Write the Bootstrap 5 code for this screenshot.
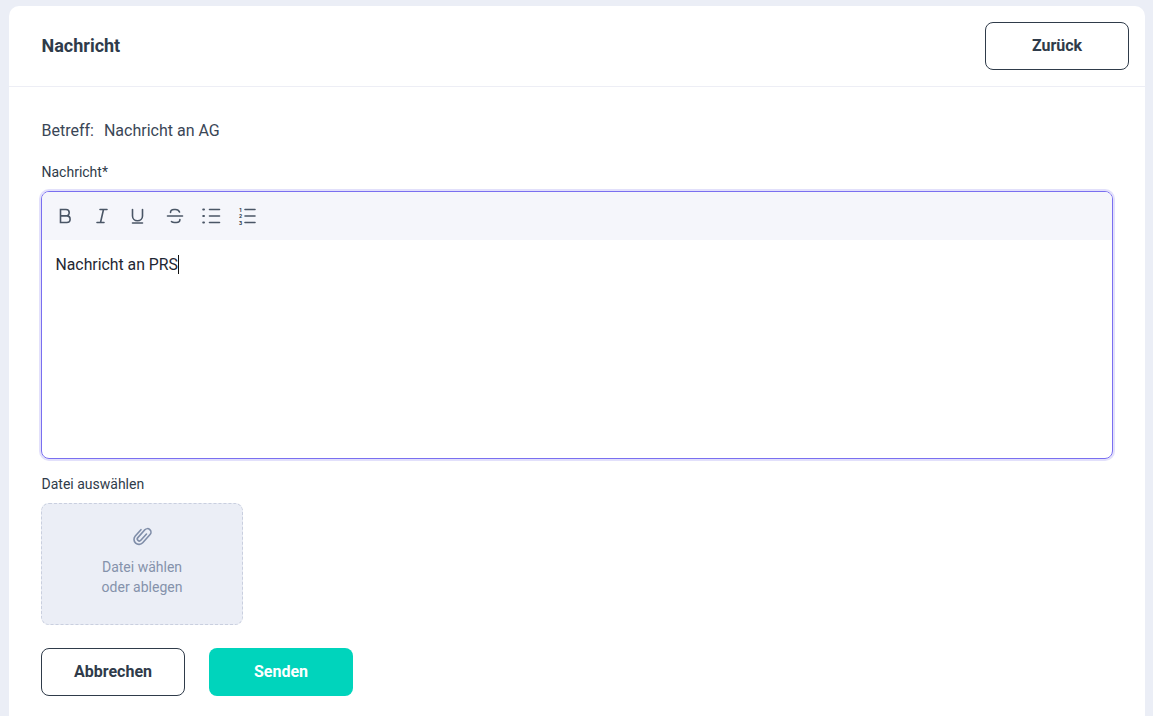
<!DOCTYPE html>
<html lang="de">
<head>
<meta charset="utf-8">
<title>Nachricht</title>
<link rel="stylesheet" href="https://cdn.jsdelivr.net/npm/bootstrap@5.3.0/dist/css/bootstrap.min.css">
<style>
html,body{height:716px;overflow:hidden}
body{background:#ebeef6;font-family:Roboto,"Liberation Sans",sans-serif;color:#2f3b4a}
.sheet{margin:6px 8px 0 9px;background:#fff;border-radius:10px 10px 0 0;height:710px}
.sheet-head{height:81px;border-bottom:1px solid #edeef5;padding:16px 16px 0 32px}
.sheet-title{font-size:18px;font-weight:700;line-height:48px;color:#2f3b4a;padding-left:.5px}
.btn-ghost{width:144px;height:48px;border:1px solid #2f3b4a;border-radius:8px;background:#fff;color:#2f3b4a;font-size:16px;font-weight:700;padding:0}
.btn-mint{width:144px;height:48px;border:0;border-radius:8px;background:#00d4bc;color:#fff;font-size:16px;font-weight:700;padding:0}
.sheet-body{padding:34px 32px 0}
.subject{font-size:16px;line-height:20px;color:#3a4656;padding-left:.5px}
.subject span{margin-left:6px}
.lbl{font-size:14px;line-height:18px;color:#2f3b4a;padding-left:.5px}
.lbl-msg{margin-top:22px}
.lbl-file{margin-top:16px}
.editor{height:268px;margin-top:10px;border:1px solid #7a6ff0;border-radius:8px;box-shadow:0 0 0 2px #e2e0fb;overflow:hidden}
.tools{height:48px;background:#f5f6fb;padding-left:14px;gap:16.4px}
.tools svg{width:20px;height:20px;fill:none;stroke:#4a5666;stroke-width:1.6;stroke-linecap:round}
.tools text{font:700 5.500px Roboto,sans-serif;fill:#2f3b4a;stroke:none;text-anchor:middle}
.edit-text{padding:15px 14px 0 13.500px;font-size:15.800px;line-height:20px;color:#1f2733}
.caret{display:inline-block;width:1px;height:19px;background:#111;vertical-align:-4px}
.drop{width:202px;height:122px;margin-top:10px;padding-bottom:7px;background:#ebeef6;border:1px dashed #c9cfdf;border-radius:8px;color:#8592ab;font-size:14px;line-height:20px}
.drop svg{width:24px;height:24px;fill:none;stroke:#7f8da8;stroke-width:1.6;stroke-linecap:round;margin-bottom:9px}
.actions{margin-top:23px;gap:24px}
</style>
</head>
<body>
<div class="sheet">
  <div class="sheet-head d-flex justify-content-between">
    <div class="sheet-title">Nachricht</div>
    <button class="btn-ghost" type="button">Zurück</button>
  </div>
  <div class="sheet-body">
    <div class="subject">Betreff: <span>Nachricht an AG</span></div>
    <div class="lbl lbl-msg">Nachricht*</div>
    <div class="editor">
      <div class="tools d-flex align-items-center">
        <svg viewBox="0 0 20 20"><path d="M4.500 3.500h5.500a3.200 3.200 0 0 1 0 6.400H4.500zM4.500 9.900h6.300a3.300 3.300 0 0 1 0 6.600H4.500z"/></svg>
        <svg viewBox="0 0 20 20"><path d="M8 3.500h7M5 16.500h7M11.500 3.500l-3 13"/></svg>
        <svg viewBox="0 0 20 20"><path d="M3.500 3.500v6.500a5 4.800 0 0 0 10 0V3.500M3.500 17h10"/></svg>
        <svg viewBox="0 0 20 20"><path d="M2.500 10h15M14.500 6C13.900 4.500 12.500 3.500 10.500 3.500H9C7 3.500 5.500 4.700 5.500 6.500M14.900 13.500c0 1.800-1.500 3-3.500 3H9.500c-1.200 0-2.200-.3-3-.9"/></svg>
        <svg viewBox="0 0 20 20"><path d="M7.500 3.500h10M7.500 10h10M7.500 16.500h10"/><path d="M1.200 3.500h.8M1.200 10h.8M1.200 16.500h.8" stroke-width="2"/></svg>
        <svg viewBox="0 0 20 20"><path d="M7 3.500h10M7 10h10M7 16.500h10"/><text x="2.500" y="5.500">1</text><text x="2.500" y="12">2</text><text x="2.500" y="18.500">3</text></svg>
      </div>
      <div class="edit-text">Nachricht an PRS<span class="caret"></span></div>
    </div>
    <div class="lbl lbl-file">Datei auswählen</div>
    <div class="drop d-flex flex-column align-items-center justify-content-center text-center">
      <svg viewBox="0 0 24 24"><path transform="rotate(42 12 12)" d="M14 7.500V16a2 2 0 0 1-4 0V5.500a3.500 3.500 0 0 1 7 0V16.500a5 5 0 0 1-10 0V8"/></svg>
      <div>Datei wählen<br>oder ablegen</div>
    </div>
    <div class="actions d-flex">
      <button class="btn-ghost" type="button">Abbrechen</button>
      <button class="btn-mint" type="button">Senden</button>
    </div>
  </div>
</div>
</body>
</html>
